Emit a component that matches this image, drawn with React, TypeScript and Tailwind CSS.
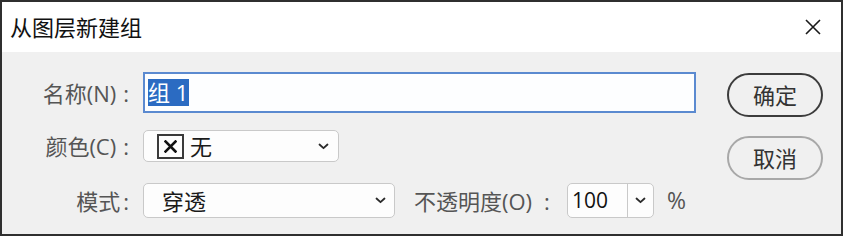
import React from "react";

const FONT = { fontFamily: '"Open Sans", "Noto Sans CJK SC", sans-serif' };

function Chevron() {
  return (
    <svg width="11" height="7" viewBox="0 0 11 7" className="block">
      <path d="M1.5 1.5 L5.5 5.2 L9.5 1.5" fill="none" stroke="#2a2a2a" strokeWidth="1.8" strokeLinecap="round" strokeLinejoin="round" />
    </svg>
  );
}

function Label({ children }: { children: React.ReactNode }) {
  return (
    <div className="w-[127px] shrink-0 text-right text-[22px] text-[#555555] leading-none whitespace-nowrap">{children}</div>
  );
}

export default function App() {
  return (
    <div className="w-[844px] h-[237px] bg-white" style={FONT}>
      <div className="w-[843px] h-[236px] border-2 border-[#2f2f2f] flex flex-col">
        {/* Title bar */}
        <div className="h-[50px] bg-white flex items-center justify-between pl-[8px] pr-[20px]">
          <div className="text-[22px] text-[#111111] leading-none">从图层新建组</div>
          <svg width="16" height="16" viewBox="0 0 16 16" className="block">
            <path d="M1 1 L15 15 M15 1 L1 15" stroke="#1a1a1a" strokeWidth="1.6" />
          </svg>
        </div>
        {/* Body */}
        <div className="flex-1 bg-[#f0f0f0] flex">
          <div className="flex-1 flex flex-col pt-[20px]">
            {/* Row 1 */}
            <div className="flex items-center h-[41px] gap-[14px]">
              <Label>
                名称(N)<span className="ml-[7px]">:</span>
              </Label>
              <div className="w-[553px] h-[41px] border-2 border-[#5b8ad0] bg-[#fdfeff] flex items-center pl-[3px]">
                <span className="bg-[#2b6bc2] text-white text-[22px] leading-[27px] pr-[1px]">组 1</span>
              </div>
            </div>
            {/* Row 2 */}
            <div className="flex items-center h-[32px] gap-[14px] mt-[17px]">
              <Label>
                颜色(C)<span className="ml-[7px]">:</span>
              </Label>
              <div className="w-[196px] h-[32px] border border-[#c9c9c9] rounded-[5px] bg-[#fdfdfd] flex items-center pl-[13px] pr-[9px]">
                <div className="w-[27px] h-[25px] border-2 border-[#3a3a3a] flex items-center justify-center">
                  <svg width="13" height="13" viewBox="0 0 13 13" className="block">
                    <path d="M1.5 1.5 L11.5 11.5 M11.5 1.5 L1.5 11.5" stroke="#111" strokeWidth="2.6" strokeLinecap="square" />
                  </svg>
                </div>
                <span className="ml-[6px] text-[22px] text-[#1a1a1a] leading-none">无</span>
                <div className="ml-auto">
                  <Chevron />
                </div>
              </div>
            </div>
            {/* Row 3 */}
            <div className="flex items-center h-[35px] mt-[21px]">
              <Label>
                模式<span className="ml-[3px]">:</span>
              </Label>
              <div className="ml-[14px] w-[252px] h-[35px] border border-[#c9c9c9] rounded-[5px] bg-[#fdfdfd] flex items-center pl-[18px] pr-[8px]">
                <span className="text-[22px] text-[#1a1a1a] leading-none">穿透</span>
                <div className="ml-auto">
                  <Chevron />
                </div>
              </div>
              <div className="ml-[19px] text-[22px] text-[#555555] leading-none whitespace-nowrap">
                不透明度(O)<span className="ml-[12px]">:</span>
              </div>
              <div className="ml-[17px] w-[87px] h-[35px] border border-[#c9c9c9] rounded-[5px] bg-[#fdfdfd] flex">
                <div className="w-[60px] border-r border-[#c9c9c9] flex items-center pl-[4px]">
                  <span className="text-[21px] text-[#111111] leading-none">100</span>
                </div>
                <div className="flex-1 flex items-center justify-center">
                  <Chevron />
                </div>
              </div>
              <div className="ml-[13px] text-[23px] text-[#555555] leading-none">%</div>
            </div>
          </div>
          {/* Buttons */}
          <div className="w-[114px] shrink-0 flex flex-col pt-[21px] gap-[19px]">
            <div className="w-[96px] h-[44px] rounded-full border-2 border-[#3c3c3c] flex items-center justify-center text-[22px] text-[#333333] leading-none">
              确定
            </div>
            <div className="w-[96px] h-[44px] rounded-full border-2 border-[#a8a8a8] flex items-center justify-center text-[22px] text-[#333333] leading-none">
              取消
            </div>
          </div>
        </div>
      </div>
    </div>
  );
}
